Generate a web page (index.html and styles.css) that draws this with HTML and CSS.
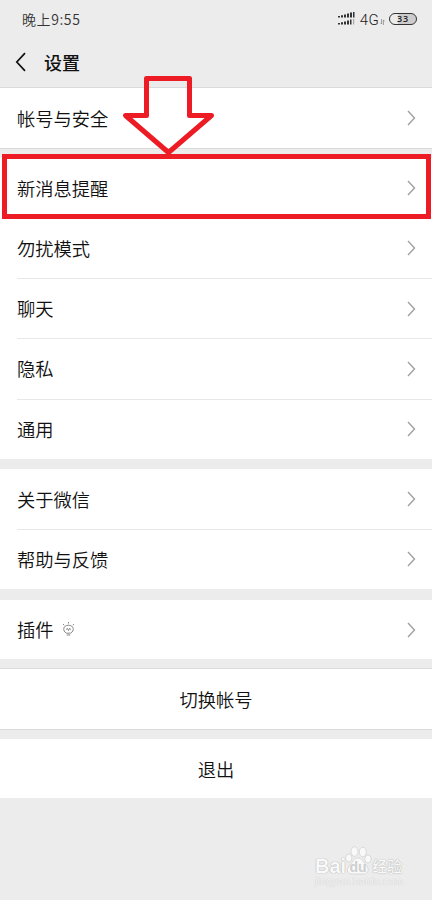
FILE: index.html
```html
<!DOCTYPE html>
<html lang="zh-CN">
<head>
<meta charset="utf-8">
<title>设置</title>
<link rel="stylesheet" href="styles.css">
</head>
<body>
<div class="screen">
  <header class="top">
    <div class="status">
      <span class="time">晚上9:55</span>
      <div class="indicators">
        <svg class="signal" width="17" height="14" viewBox="0 0 17 14" fill="#333"><path d="M0 4h2v1.5H0zM3 3.2h2v2.3H3zM6 2.4h2v3.1H6zM9 1.4h2v4.1H9zM12 .6h2v4.9h-2zM15 0h1.5v5.5H15zM0 11h2v1.5H0zM3 10.2h2v2.3H3zM6 9.4h2v3.1H6zM9 8.4h2v4.1H9zM12 7.6h1.5v4.9H12z"/><path d="M15 7h1.2v5.5H15z" fill="#aaa"/></svg>
        <span class="network">4G</span>
        <svg class="traffic" width="5" height="6" viewBox="0 0 5 6" fill="none" stroke="#888" stroke-width=".8"><path d="M1.6 0v5L.3 3.7M3.4 6V1l1.3 1.3"/></svg>
        <span class="battery">33</span>
      </div>
    </div>
    <div class="titlebar">
      <svg class="back" width="12" height="20" viewBox="0 0 12 20" fill="none" stroke="#111" stroke-width="1.7"><path d="M10 1.2 1.8 10l8.2 8.8"/></svg>
      <h1>设置</h1>
    </div>
  </header>

  <section class="group lined account">
    <div class="row"><span>帐号与安全</span><svg class="chev" viewBox="0 0 9 16"><path d="m1 1 6.5 7L1 15"/></svg></div>
  </section>
  <section class="group general">
    <div class="row first"><span>新消息提醒</span><svg class="chev" viewBox="0 0 9 16"><path d="m1 1 6.5 7L1 15"/></svg></div>
    <div class="row"><span>勿扰模式</span><svg class="chev" viewBox="0 0 9 16"><path d="m1 1 6.5 7L1 15"/></svg></div>
    <div class="row"><span>聊天</span><svg class="chev" viewBox="0 0 9 16"><path d="m1 1 6.5 7L1 15"/></svg></div>
    <div class="row"><span>隐私</span><svg class="chev" viewBox="0 0 9 16"><path d="m1 1 6.5 7L1 15"/></svg></div>
    <div class="row"><span>通用</span><svg class="chev" viewBox="0 0 9 16"><path d="m1 1 6.5 7L1 15"/></svg></div>
  </section>
  <section class="group about">
    <div class="row"><span>关于微信</span><svg class="chev" viewBox="0 0 9 16"><path d="m1 1 6.5 7L1 15"/></svg></div>
    <div class="row"><span>帮助与反馈</span><svg class="chev" viewBox="0 0 9 16"><path d="m1 1 6.5 7L1 15"/></svg></div>
  </section>
  <section class="group plugins">
    <div class="row"><span>插件</span><svg class="bulb" width="13" height="15" viewBox="0 0 13 15" fill="none" stroke="#777" stroke-width=".9"><path d="M4.5 11.2C.2 9 1 3.200 6.500 3.200S12.800 9 8.500 11.200zM4.700 13h3.600M6.500 0v1.500M1 2l1.200 1.200M12 2l-1.200 1.200M4 7.500l1.500-1 1 2 1-2 1.500 1"/></svg><svg class="chev" viewBox="0 0 9 16"><path d="m1 1 6.500 7L1 15"/></svg></div>
  </section>
  <section class="group lined switch"><div class="row action"><span>切换帐号</span></div></section>
  <section class="group logout"><div class="row action"><span>退出</span></div></section>

  <div class="highlight"></div>
  <svg class="arrow" width="96" height="84" viewBox="120 74 96 84" fill="none" stroke="#ed1c24" stroke-width="5" stroke-linejoin="round"><path d="M146.500 78.500h43v37h22L168.500 152.500 125.500 115.500h21z"/></svg>

  <div class="watermark">
    <div class="brand">
      <span>Bai</span>
      <svg width="27" height="29" viewBox="0 0 27 29" fill="#f9f9f9" stroke="#d2d2d2" stroke-width=".8"><ellipse cx="3.800" cy="12" rx="3.200" ry="4"/><ellipse cx="9.500" cy="5.500" rx="3.500" ry="4.800"/><ellipse cx="17.800" cy="6" rx="3.500" ry="4.800"/><ellipse cx="23" cy="13" rx="3.200" ry="4"/><path d="M13 12c4 0 5 4 8 7 4 4 2 9-2 9H7c-5 0-6-5-2-9 3-3 4-7 8-7z"/><text x="13" y="26" text-anchor="middle" class="du">du</text></svg>
      <span class="cn">经验</span>
    </div>
    <div class="url">jingyan.baidu.com</div>
  </div>
</div>
</body>
</html>
```
FILE: styles.css
```css
* { box-sizing: border-box; }
body {
  margin: 0;
  background: #ececec;
  color: #111;
  font-family: "Noto Sans CJK SC", sans-serif;
}
.screen {
  position: relative;
  width: 432px;
  height: 900px;
  overflow: hidden;
  background: #ececec;
}
.top { height: 87px; }
.status {
  display: flex;
  justify-content: space-between;
  height: 38px;
  padding: 0 15px 0 22px;
  align-items: center;
  color: #333;
}
.time { font-size: 14px; font-weight: 350; letter-spacing: .6px; }
.indicators { display: flex; align-items: center; }
.network { margin-left: 5px; font: 300 15px/16px Roboto, sans-serif; letter-spacing: .3px; color: #222; padding-top: 2px; }
.traffic { margin: 5px 4px 0 1px; }
.battery {
  width: 28px;
  height: 12px;
  border: 1.5px solid #333;
  border-radius: 6px;
  background: linear-gradient(90deg, #ececec 32%, #ccc 32%);
  font: 600 9px/10px "Open Sans", sans-serif;
  letter-spacing: .8px;
  text-align: center;
  color: #222;
}
.titlebar { display: flex; align-items: center; height: 48px; padding-left: 15px; }
.back { margin-right: 17px; }
h1 { margin: 0; font-size: 18px; font-weight: 500; line-height: 26px; }
.group { display: flex; flex-direction: column; background: #fff; }
.lined { border-top: 1px solid #dadada; border-bottom: 1px solid #dadada; }
.account { height: 62px; margin-bottom: 9px; }
.general { height: 301px; margin-bottom: 10px; }
.about { height: 120px; margin-bottom: 11px; }
.plugins { height: 59px; margin-bottom: 9px; }
.switch { height: 62px; margin-bottom: 9px; }
.logout { height: 59px; }
.row {
  flex: 1;
  display: flex;
  align-items: center;
  margin-left: 17px;
  padding-right: 16px;
  font-size: 18.3px;
  font-weight: 350;
  line-height: 26px;
}
.row span { padding-bottom: 1px; }
.row.first span, .about .row:first-child span, .logout .row span { padding-bottom: 0; }
.row + .row { border-top: 1px solid #e8e8e8; }
.row.first + .row { border-top-color: transparent; }
.row.action { justify-content: center; margin: 0; padding: 0; }
.chev {
  width: 9px;
  height: 16px;
  margin-left: auto;
  fill: none;
  stroke: #a0a0a0;
  stroke-width: 1.4;
}
.bulb { margin-left: 8px; }
.highlight {
  position: absolute;
  left: 2px;
  top: 154px;
  width: 429px;
  height: 65px;
  border: 5px solid #ed1c24;
}
.arrow { position: absolute; left: 120px; top: 74px; }
.watermark {
  position: absolute;
  left: 315px;
  top: 846px;
  color: #f9f9f9;
  text-shadow: 0 0 1px #aaa, 0 0 1px #bbb;
}
.brand { display: flex; align-items: flex-end; height: 29px; font: bold 20px/17px "Liberation Sans", sans-serif; }
.brand svg { margin: 0 0 0 -1px; }
.du { font: bold 14px "Liberation Sans", sans-serif; fill: #cfcfcf; stroke: none; text-shadow: none; }
.cn { font: 500 15px/19px "Noto Sans CJK SC", sans-serif; }
.url { font: 11px/13px "Liberation Sans", sans-serif; color: #f4f4f4; text-shadow: 0 0 1px #bbb; }
```
